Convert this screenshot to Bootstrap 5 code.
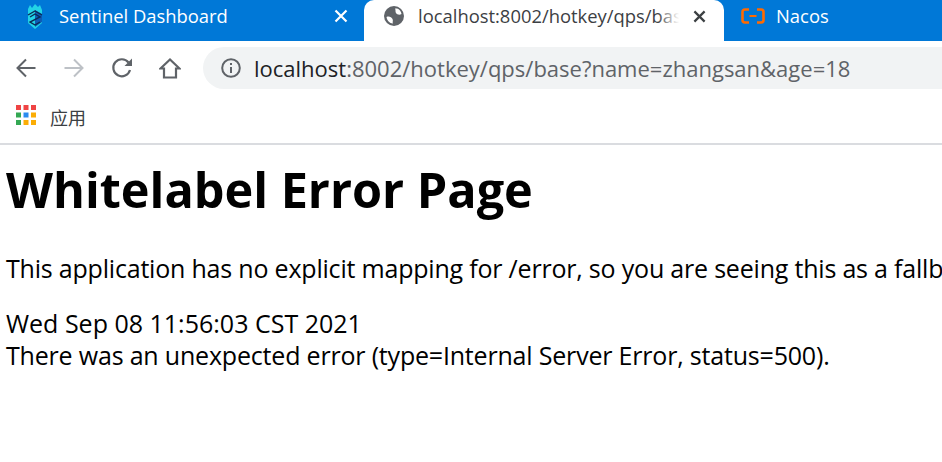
<!DOCTYPE html>
<html lang="en">
<head>
<meta charset="utf-8">
<title>Whitelabel Error Page</title>
<link rel="stylesheet" href="https://cdn.jsdelivr.net/npm/bootstrap@5.3.0/dist/css/bootstrap.min.css">
<style>
html,body{height:462px;overflow:hidden;background:#fff;margin:0}
body{font-family:"Open Sans","Noto Sans",sans-serif;color:#000}
.tabstrip{height:41px;background:#0078d7;overflow:hidden}
.tabitem{height:41px;color:#fff;font-size:18.4px;white-space:nowrap;overflow:hidden;padding-bottom:9px}
.tabone{width:364px;padding-left:25px}
.tabactive{width:360px;background:#fff;color:#3c4043;border-radius:10px 10px 0 0;padding-left:20px;padding-right:18px}
.tabthree{flex:1;padding-left:17px}
.tabtitle{margin-left:14px}
.tabthree .tabtitle{margin-left:11px}
.tabclip{width:265px;overflow:hidden;position:relative;margin-left:14px;flex:none}
.tabclip::after{content:"";position:absolute;right:0;top:0;bottom:0;width:26px;background:linear-gradient(90deg,rgba(255,255,255,0),#fff 85%)}
.toolrow{height:54px;background:#fff;padding-left:15px}
.navgap{width:22px;height:22px;margin-right:26px;flex:none}
.addressbox{height:42px;width:1000px;margin-left:-4px;background:#f1f3f4;border-radius:21px;padding-left:18px;font-size:22px;color:#5f6368;white-space:nowrap;flex:none}
.hostpart{color:#202124;margin-left:13px}
.portpart{color:#5f6368}
.bookmarks{height:50px;background:#fff;border-bottom:2px solid #dadce0;padding:10px 0 0 16px;font-size:18px;color:#3c4043}
.marklabel{margin-left:14px;font-family:"Noto Sans CJK SC",sans-serif;line-height:24px}
.pagebody{padding:0 6px;white-space:nowrap}
.pagebody h1{font-size:48.6px;font-weight:700;margin:10px 0 0;line-height:68px}
.pagebody p{font-size:25px;line-height:32px;margin:0}
.pagemsg{margin-top:29px!important;letter-spacing:-.2px}
.pagedate{margin-top:23px!important}
.pageerr{letter-spacing:-.19px}
</style>
</head>
<body>
<div class="tabstrip d-flex">
  <div class="tabitem tabone d-flex align-items-center">
    <svg class="flex-shrink-0" width="20" height="26" viewBox="0 0 20 26"><path d="M3 6 5 2 7 5 10 1 13 4 15 2 17 7 17 20 10 26 3 20Z" fill="#22d3e6"/><path d="M10 7 17 11V19L10 24Z" fill="#0d5bb5"/><path d="M3 12 10 8 17 12M5 14 10 11 15 14 5 19 10 22 15 19" fill="none" stroke="#0b2a55" stroke-width="1.4"/></svg>
    <span class="tabtitle">Sentinel Dashboard</span>
    <svg class="ms-auto me-3 flex-shrink-0" width="14" height="14" viewBox="0 0 14 14"><path d="M1.5 1.5 12.5 12.5M12.5 1.5 1.5 12.500" stroke="#fff" stroke-width="2.2"/></svg>
  </div>
  <div class="tabitem tabactive d-flex align-items-center">
    <svg width="20" height="20" viewBox="0 0 20 20" class="flex-shrink-0"><circle cx="10" cy="10" r="10" fill="#5f6368"/><path d="M11 2.500C14 2 17 4 17.500 8 15.500 9.500 13 8.500 12 7 11 5.500 12 4 11 2.500ZM2.500 11C5 10 7.500 11 8.500 13 9.500 15 8 16 9 17.500 5.500 17.500 3 14.500 2.500 11Z" fill="#fff"/></svg>
    <div class="tabclip">localhost:8002/hotkey/qps/base?name=zhangsan</div>
    <svg class="ms-auto flex-shrink-0" width="13" height="13" viewBox="0 0 14 14"><path d="M1.5 1.5 12.5 12.5M12.5 1.5 1.5 12.500" stroke="#3c4043" stroke-width="2.4"/></svg>
  </div>
  <div class="tabitem tabthree d-flex align-items-center">
    <svg class="flex-shrink-0" width="24" height="16" viewBox="0 0 24 16"><path d="M8 1.500H4Q1.500 1.500 1.500 4V12Q1.500 14.500 4 14.500H8M16 1.500H20Q22.500 1.500 22.500 4V12Q22.500 14.500 20 14.500H16" fill="none" stroke="#ff6a00" stroke-width="2.600"/><path d="M8.500 8H15.500" stroke="#ff6a00" stroke-width="2"/></svg>
    <span class="tabtitle">Nacos</span>
  </div>
</div>
<div class="toolrow d-flex align-items-center">
  <svg class="navgap" viewBox="0 0 22 22"><path d="M20.500 11H2.500M11 2.500 2.500 11 11 19.500" fill="none" stroke="#5f6368" stroke-width="2"/></svg>
  <svg class="navgap" viewBox="0 0 22 22"><path d="M1.500 11H19.500M11 2.500 19.500 11 11 19.500" fill="none" stroke="#bdc1c6" stroke-width="2"/></svg>
  <svg class="navgap" viewBox="0 0 22 22"><path d="M19 13A8.500 8.500 0 1 1 17.500 5.500" fill="none" stroke="#5f6368" stroke-width="2.200"/><path d="M21 1.500V9H13.500Z" fill="#5f6368"/></svg>
  <svg class="navgap" viewBox="0 0 22 22"><path d="M1.500 11.500 11 2.500 20.500 11.500H17V20.500H5V11.500Z" fill="none" stroke="#5f6368" stroke-width="2.200"/></svg>
  <div class="addressbox d-flex align-items-center">
    <svg class="flex-shrink-0" width="20" height="20" viewBox="0 0 20 20"><circle cx="10" cy="10" r="8.800" fill="none" stroke="#5f6368" stroke-width="2"/><path d="M10 9V15M10 5V7" stroke="#5f6368" stroke-width="2"/></svg>
    <span class="hostpart">localhost<span class="portpart">:8002/hotkey/qps/base?name=zhangsan&amp;age=18</span></span>
  </div>
</div>
<div class="bookmarks d-flex align-items-start">
  <svg class="flex-shrink-0" width="20" height="20" viewBox="0 0 20 20"><rect width="5" height="5" fill="#ef4444"/><rect x="7.500" width="5" height="5" fill="#ef4444"/><rect x="15" width="5" height="5" fill="#ef4444"/><rect y="7.500" width="5" height="5" fill="#34a853"/><rect x="7.500" y="7.500" width="5" height="5" fill="#2b8cf0"/><rect x="15" y="7.500" width="5" height="5" fill="#fbad05"/><rect y="15" width="5" height="5" fill="#34a853"/><rect x="7.500" y="15" width="5" height="5" fill="#fbad05"/><rect x="15" y="15" width="5" height="5" fill="#fbad05"/></svg>
  <span class="marklabel">应用</span>
</div>
<main class="pagebody">
  <h1>Whitelabel Error Page</h1>
  <p class="pagemsg">This application has no explicit mapping for /error, so you are seeing this as a fallback.</p>
  <p class="pagedate">Wed Sep 08 11:56:03 CST 2021</p>
  <p class="pageerr">There was an unexpected error (type=Internal Server Error, status=500).</p>
</main>
</body>
</html>
